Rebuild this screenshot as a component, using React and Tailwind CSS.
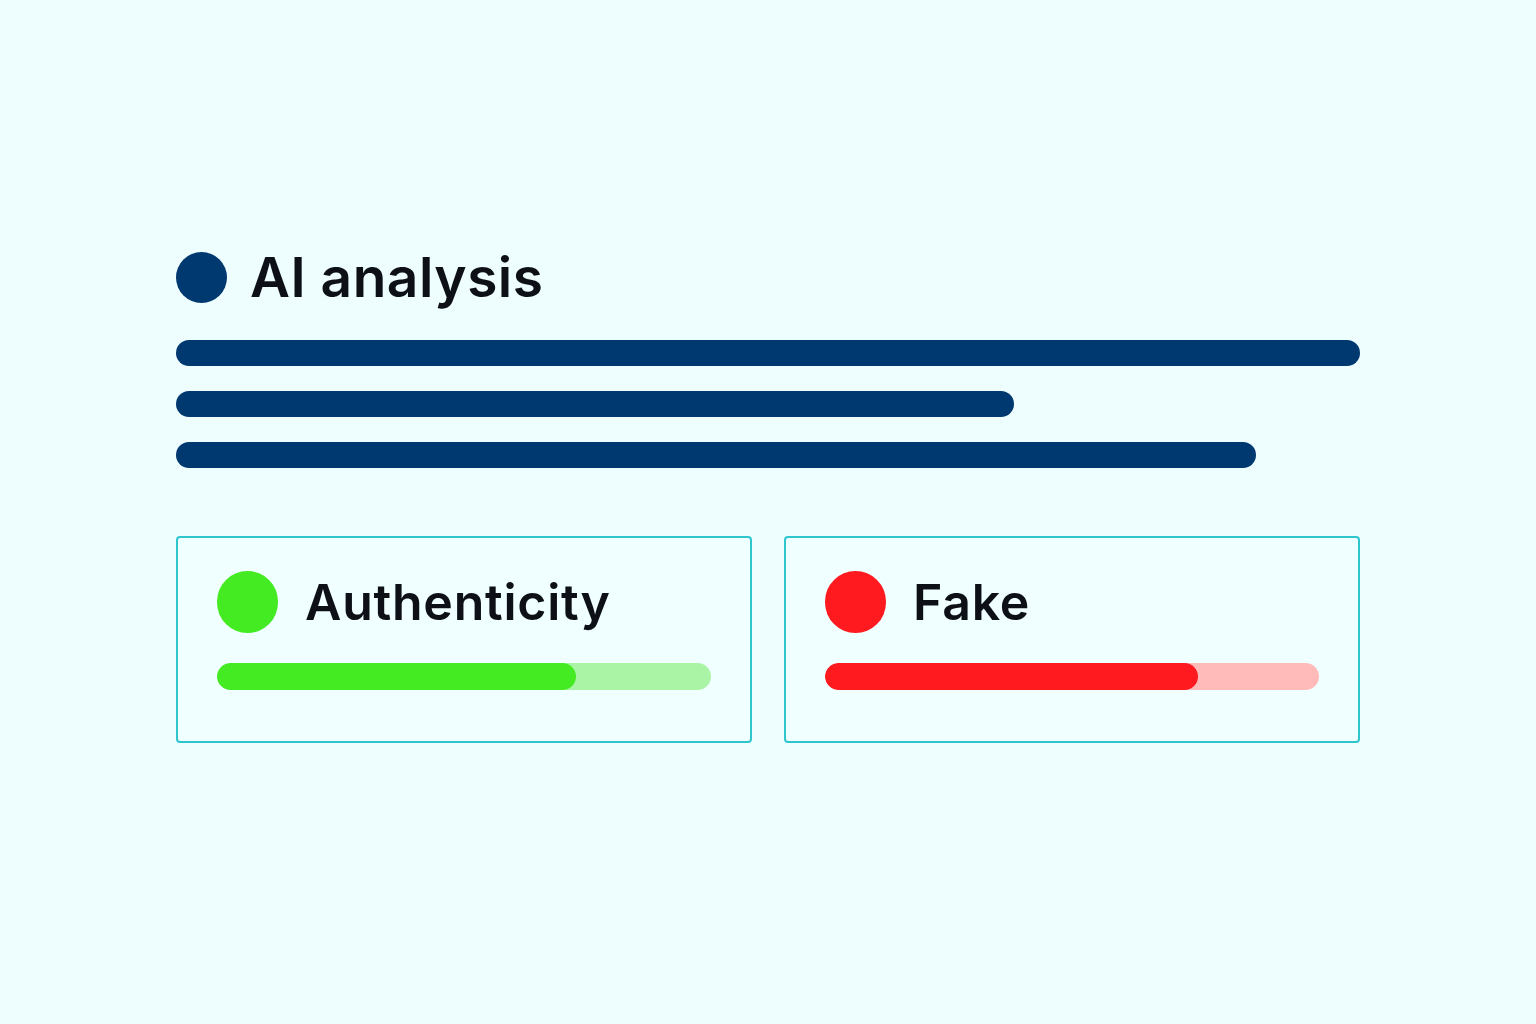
export default function App() {
  const scores = [
    { label: 'Authenticity', value: 72.7, dot: 'bg-[#44ea22]', fill: 'bg-[#44ea22]', track: 'bg-[#aaf5a5]' },
    { label: 'Fake', value: 75.6, dot: 'bg-[#fe1a1e]', fill: 'bg-[#fe1a1e]', track: 'bg-[#ffbaba]' },
  ]

  return (
    <div className="min-h-screen w-full bg-[#eefefe] font-['Inter',sans-serif] text-[#0d1117]">
      <div className="ml-[176px] w-[1184px] pt-[249px]">
        {/* Header */}
        <div className="flex h-[56px] items-center gap-[23px]">
          <div className="h-[51px] w-[51px] shrink-0 rounded-full bg-[#003870]" />
          <h1 className="text-[55px] font-semibold leading-none tracking-[0.5px]">AI analysis</h1>
        </div>

        {/* Summary lines */}
        <div className="mt-[35px] flex flex-col gap-[25px]">
          <div className="h-[26px] w-full rounded-full bg-[#003870]" />
          <div className="h-[26px] w-[838px] rounded-full bg-[#003870]" />
          <div className="h-[26px] w-[1080px] rounded-full bg-[#003870]" />
        </div>

        {/* Score cards */}
        <div className="mt-[68px] grid grid-cols-2 gap-[32px]">
          {scores.map((s) => (
            <div
              key={s.label}
              className="rounded-[4px] border-2 border-[#2ec6cc] bg-[#f0ffff] px-[39px] pt-[33px] pb-[51px]"
            >
              <div className="flex h-[62px] items-center gap-[27px]">
                <div className={`h-[62px] w-[61px] shrink-0 rounded-full ${s.dot}`} />
                <span className="text-[50px] font-semibold leading-none tracking-[0.75px]">{s.label}</span>
              </div>
              <div className={`mt-[30px] h-[27px] w-full overflow-hidden rounded-full ${s.track}`}>
                <div className={`h-full rounded-full ${s.fill}`} style={{ width: `${s.value}%` }} />
              </div>
            </div>
          ))}
        </div>
      </div>
    </div>
  )
}
